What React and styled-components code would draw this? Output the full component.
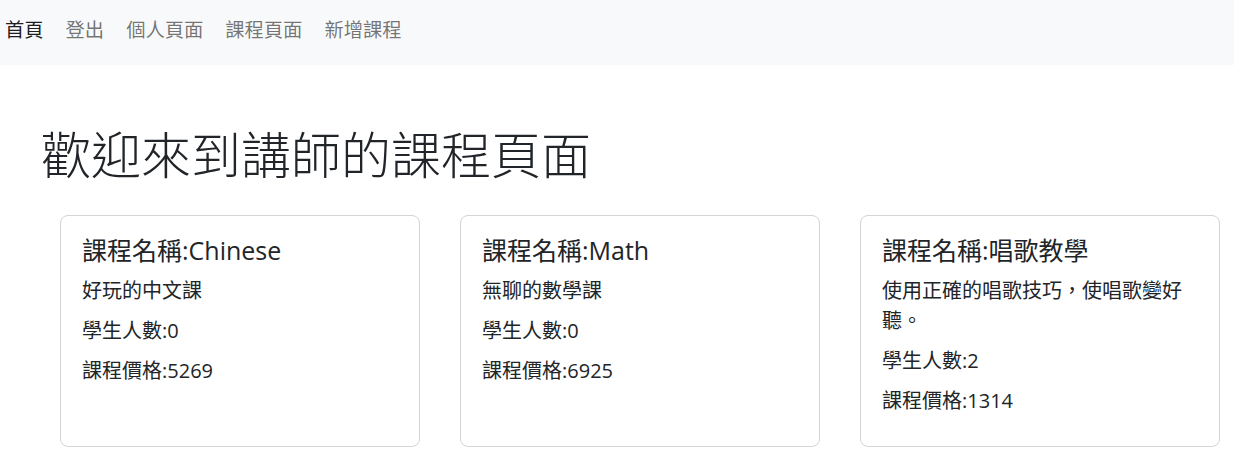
import React from 'react';
import styled, { createGlobalStyle } from 'styled-components';

const GlobalStyle = createGlobalStyle`
    body {
        margin: 0;
        background: #fff;
        color: #212529;
        font-family: "Segoe UI", "Open Sans", "Noto Sans CJK TC", sans-serif;
    }
`

const NavBar = styled.nav`
    display: flex;
    align-items: flex-start;
    gap: 22px;
    height: 65px;
    box-sizing: border-box;
    padding: 15px 0 0 5px;
    background: #f8f9fa;
`
const NavLink = styled.a`
    font-size: 19.3px;
    line-height: 30px;
    text-decoration: none;
    color: ${props => props.active ? 'rgba(0,0,0,0.9)' : 'rgba(0,0,0,0.55)'};
    cursor: pointer;
`
const Main = styled.main`
    padding: 60px 0 0 0;
`
const PageTitle = styled.h1`
    margin: 0 0 30px 41px;
    font-size: 50px;
    line-height: 60px;
    font-weight: 300;
`
const CardRow = styled.div`
    display: grid;
    grid-template-columns: repeat(3, 360px);
    gap: 40px;
    padding-left: 60px;
`
const Card = styled.div`
    border: 1px solid #d3d4d5;
    border-radius: 8px;
    padding: 19px 20px 20px 21px;
`
const CardTitle = styled.h5`
    margin: 0 0 11px 0;
    font-size: 25px;
    line-height: 30px;
    font-weight: 400;
`
const CardText = styled.p`
    margin: 0 0 10px 0;
    font-size: 20px;
    line-height: 30px;
`

const courses = [
    { name: 'Chinese', desc: '好玩的中文課', students: 0, price: 5269 },
    { name: 'Math', desc: '無聊的數學課', students: 0, price: 6925 },
    { name: '唱歌教學', desc: '使用正確的唱歌技巧，使唱歌變好聽。', students: 2, price: 1314 },
];

const App = () => {
    return (
        <>
            <GlobalStyle />
            <NavBar>
                <NavLink active>首頁</NavLink>
                <NavLink>登出</NavLink>
                <NavLink>個人頁面</NavLink>
                <NavLink>課程頁面</NavLink>
                <NavLink>新增課程</NavLink>
            </NavBar>
            <Main>
                <PageTitle>歡迎來到講師的課程頁面</PageTitle>
                <CardRow>
                    {courses.map(c => (
                        <Card key={c.name}>
                            <CardTitle>課程名稱:{c.name}</CardTitle>
                            <CardText>{c.desc}</CardText>
                            <CardText>學生人數:{c.students}</CardText>
                            <CardText>課程價格:{c.price}</CardText>
                        </Card>
                    ))}
                </CardRow>
            </Main>
        </>
    );
}
export default App;
